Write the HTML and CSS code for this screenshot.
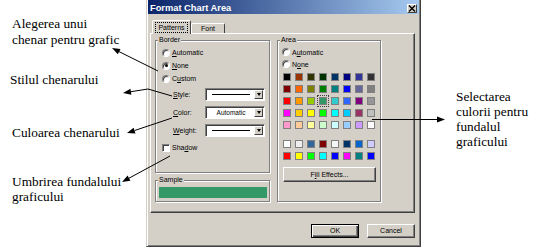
FILE: index.html
```html
<!DOCTYPE html>
<html>
<head>
<meta charset="utf-8">
<link rel="stylesheet" href="styles.css">
</head>
<body>
<div class="figure">
  <div class="notes-left">
    <p class="note n1">Alegerea unui<br>chenar pentru grafic</p>
    <p class="note n2">Stilul chenarului</p>
    <p class="note n3">Culoarea chenarului</p>
    <p class="note n4">Umbrirea fundalului<br>graficului</p>
  </div>

  <div class="dialog">
    <div class="titlebar">
      <span class="title">Format Chart Area</span>
      <span class="close"><svg width="8" height="7" viewBox="0 0 8 7"><path d="M1 0.5L7 6.5M7 0.5L1 6.5" stroke="#000" stroke-width="1.4"/></svg></span>
    </div>
    <div class="tabs">
      <div class="tab active"><span class="focus">Patterns</span></div>
      <div class="tab">Font</div>
    </div>
    <div class="panel">
      <div class="col-left">
        <fieldset class="group border-group">
          <legend>Border</legend>
          <div class="radios">
            <div class="radio"><span class="dot"></span><span><u>A</u>utomatic</span></div>
            <div class="radio"><span class="dot on"></span><span><u>N</u>one</span></div>
            <div class="radio"><span class="dot"></span><span>C<u>u</u>stom</span></div>
          </div>
          <div class="fields">
            <div class="field"><span class="flabel"><u>S</u>tyle:</span><span class="select"><span class="value"><span class="line"></span></span><span class="arrow"></span></span></div>
            <div class="field"><span class="flabel"><u>C</u>olor:</span><span class="select"><span class="value">Automatic</span><span class="arrow"></span></span></div>
            <div class="field"><span class="flabel"><u>W</u>eight:</span><span class="select"><span class="value"><span class="line"></span></span><span class="arrow"></span></span></div>
          </div>
          <div class="check"><span class="box"></span><span>Sha<u>d</u>ow</span></div>
        </fieldset>
        <fieldset class="group sample-group">
          <legend>Sample</legend>
          <div class="sample"></div>
        </fieldset>
      </div>
      <fieldset class="group area-group">
        <legend>Area</legend>
        <div class="radios area-radios">
          <div class="radio"><span class="dot"></span><span>A<u>u</u>tomatic</span></div>
          <div class="radio"><span class="dot"></span><span>N<u>o</u>ne</span></div>
        </div>
        <div class="swatches">
          <span class="sw" style="background:#000000"></span>
          <span class="sw" style="background:#993300"></span>
          <span class="sw" style="background:#333300"></span>
          <span class="sw" style="background:#003300"></span>
          <span class="sw" style="background:#003366"></span>
          <span class="sw" style="background:#000080"></span>
          <span class="sw" style="background:#333399"></span>
          <span class="sw" style="background:#333333"></span>
          <span class="sw" style="background:#800000"></span>
          <span class="sw" style="background:#ff6600"></span>
          <span class="sw" style="background:#808000"></span>
          <span class="sw" style="background:#008000"></span>
          <span class="sw" style="background:#008080"></span>
          <span class="sw" style="background:#0000ff"></span>
          <span class="sw" style="background:#666699"></span>
          <span class="sw" style="background:#808080"></span>
          <span class="sw" style="background:#ff0000"></span>
          <span class="sw" style="background:#ff9900"></span>
          <span class="sw" style="background:#99cc00"></span>
          <span class="sw selected" style="background:#339966"></span>
          <span class="sw" style="background:#33cccc"></span>
          <span class="sw" style="background:#3366ff"></span>
          <span class="sw" style="background:#800080"></span>
          <span class="sw" style="background:#969696"></span>
          <span class="sw" style="background:#ff00ff"></span>
          <span class="sw" style="background:#ffcc00"></span>
          <span class="sw" style="background:#ffff00"></span>
          <span class="sw" style="background:#00ff00"></span>
          <span class="sw" style="background:#00ffff"></span>
          <span class="sw" style="background:#00ccff"></span>
          <span class="sw" style="background:#993366"></span>
          <span class="sw" style="background:#c0c0c0"></span>
          <span class="sw" style="background:#ff99cc"></span>
          <span class="sw" style="background:#ffcc99"></span>
          <span class="sw" style="background:#ffff99"></span>
          <span class="sw" style="background:#ccffcc"></span>
          <span class="sw" style="background:#ccffff"></span>
          <span class="sw" style="background:#99ccff"></span>
          <span class="sw" style="background:#cc99ff"></span>
          <span class="sw" style="background:#ffffff"></span>
        </div>
        <div class="swatches second">
          <span class="sw" style="background:#ffffff"></span>
          <span class="sw" style="background:#eeeeee"></span>
          <span class="sw" style="background:#336699"></span>
          <span class="sw" style="background:#800000"></span>
          <span class="sw" style="background:#f4f4f4"></span>
          <span class="sw" style="background:#003366"></span>
          <span class="sw" style="background:#0066cc"></span>
          <span class="sw" style="background:#ccccff"></span>
          <span class="sw" style="background:#ff0000"></span>
          <span class="sw" style="background:#ffff00"></span>
          <span class="sw" style="background:#00ff00"></span>
          <span class="sw" style="background:#00ffff"></span>
          <span class="sw" style="background:#0000ff"></span>
          <span class="sw" style="background:#ff00ff"></span>
          <span class="sw" style="background:#008080"></span>
          <span class="sw" style="background:#0000ff"></span>
        </div>
        <div class="fill-btn">F<u>i</u>ll Effects...</div>
      </fieldset>
    </div>
    <div class="buttons">
      <div class="btn default">OK</div>
      <div class="btn">Cancel</div>
    </div>
  </div>

  <div class="notes-right">
    <p class="note n5">Selectarea<br>culorii pentru<br>fundalul<br>graficului</p>
  </div>

  <svg class="arrows" width="556" height="252" viewBox="0 0 556 252">
    <g stroke="#000" stroke-width="1" fill="none">
      <line x1="158" y1="71" x2="119" y2="51.6"/>
      <polyline points="172,96 148,89 130.9,91.7"/>
      <line x1="172" y1="118" x2="134.6" y2="130.5"/>
      <line x1="170" y1="156" x2="129" y2="178.2"/>
      <line x1="372" y1="119.5" x2="437" y2="119.5"/>
    </g>
    <g fill="#000">
      <polygon points="112,48 120.5,48.9 117.8,54.3"/>
      <polygon points="123,93 131.4,94.7 130.4,88.8"/>
      <polygon points="127,133 135.5,133.4 133.6,127.7"/>
      <polygon points="122,182 130.4,180.8 127.6,175.6"/>
      <polygon points="445,119.5 437,116.5 437,122.5"/>
    </g>
  </svg>
</div>
</body>
</html>
```

FILE: styles.css
```css
* { box-sizing: border-box; }
html, body { margin: 0; padding: 0; background: #fff; }

.figure {
  position: relative;
  width: 556px;
  height: 252px;
  display: flex;
  overflow: hidden;
}

/* annotations */
.notes-left {
  width: 146px;
  flex: none;
  display: flex;
  flex-direction: column;
  padding-left: 12px;
}
.note {
  margin: 0;
  font-family: "Liberation Serif", "Times New Roman", serif;
  font-size: 13.33px;
  line-height: 15px;
  color: #000;
  white-space: nowrap;
}
.n1 { margin-top: 16px; line-height: 16px; }
.n2 { margin-top: 24px; margin-left: -2px; }
.n3 { margin-top: 38px; }
.n4 { margin-top: 34px; }
.notes-right { flex: 1; padding-left: 35px; padding-top: 89px; }

/* dialog */
.dialog {
  width: 275px;
  height: 247px;
  flex: none;
  background: #d4d0c8;
  border-left: 1px solid #d4d0c8;
  border-right: 1px solid #404040;
  border-bottom: 1px solid #404040;
  box-shadow: inset 1px 0 #fff, inset -1px -1px #808080;
  padding: 0 1px 2px 1px;
  display: flex;
  flex-direction: column;
  font-family: "Liberation Sans", Arial, sans-serif;
  font-size: 7px;
  color: #000;
}
.titlebar {
  height: 14px;
  display: flex;
  align-items: flex-start;
  background: linear-gradient(to right, #0a246a, #a6caf0);
}
.title {
  flex: 1;
  padding: 3px 0 0 2px;
  font-weight: bold;
  font-size: 9.3px;
  line-height: 11px;
  color: #fff;
  white-space: nowrap;
}
.close {
  width: 10px;
  height: 9px;
  margin: 4px 2px 0 0;
  background: #d4d0c8;
  border: 1px solid;
  border-color: #fff #404040 #404040 #fff;
  display: flex;
  align-items: center;
  justify-content: center;
}
.close svg { display: block; }

.tabs {
  height: 19px;
  display: flex;
  align-items: flex-end;
  padding-left: 4px;
}
.tab {
  height: 10px;
  width: 34px;
  border: 1px solid;
  border-color: #fff #404040 transparent #fff;
  border-bottom: none;
  border-radius: 2px 2px 0 0;
  text-align: center;
  line-height: 9px;
  white-space: nowrap;
}
.tab.active {
  width: 39px;
  height: 14px;
  margin-bottom: -1px;
  position: relative;
  z-index: 1;
  background: #d4d0c8;
  padding-top: 2px;
}
.focus {
  display: inline-block;
  padding: 0 2px;
  line-height: 9px;
  outline: 1px dotted #000;
}

.panel {
  width: 265px;
  height: 180px;
  margin: 0 4px 0 2px;
  border: 1px solid;
  border-color: #fff #404040 #404040 #fff;
  box-shadow: inset -1px -1px #808080;
  padding: 2px 0 0 4px;
  display: flex;
  gap: 7px;
}
.col-left {
  width: 115px;
  display: flex;
  flex-direction: column;
}

.group {
  margin: 0;
  padding: 0;
  min-width: 0;
  border: 1px solid #808080;
  box-shadow: inset 1px 1px #fff, 1px 1px #fff;
}
.group legend {
  margin-left: 2px;
  padding: 0 1px;
  height: 8px;
  line-height: 8px;
  font-size: 7px;
  background: #d4d0c8;
  position: relative;
}
.border-group { height: 137px; }
.sample-group { height: 26px; margin-top: 3px; }
.area-group { width: 104px; height: 166px; }

.radios { padding: 2px 0 0 6px; }
.radio {
  height: 13px;
  display: flex;
  align-items: center;
  white-space: nowrap;
}
.area-radios { padding-left: 4px; }
.area-radios .radio { height: 12px; }
.dot {
  width: 8px;
  height: 8px;
  margin-right: 2px;
  border-radius: 50%;
  background: #fff;
  border: 1px solid;
  border-color: #808080 #fff #fff #808080;
  box-shadow: inset 1px 1px #404040;
  display: flex;
  align-items: center;
  justify-content: center;
  flex: none;
}
.dot.on::after {
  content: "";
  width: 3px;
  height: 3px;
  border-radius: 50%;
  background: #000;
}

.fields {
  margin-top: 3px;
  display: flex;
  flex-direction: column;
  gap: 5px;
}
.field {
  height: 13px;
  display: flex;
  align-items: center;
}
.flabel {
  width: 49px;
  padding-left: 17px;
  white-space: nowrap;
}
.select {
  width: 60px;
  height: 13px;
  display: flex;
  background: #fff;
  border: 1px solid;
  border-color: #808080 #fff #fff #808080;
  box-shadow: inset 1px 1px #404040;
  padding: 1px 1px 1px 2px;
}
.value {
  flex: 1;
  display: flex;
  align-items: center;
  justify-content: center;
  font-size: 6.5px;
  white-space: nowrap;
}
.line {
  display: block;
  width: 38px;
  height: 1px;
  background: #000;
}
.arrow {
  width: 9px;
  background: #d4d0c8;
  border: 1px solid;
  border-color: #fff #404040 #404040 #fff;
  display: flex;
  align-items: center;
  justify-content: center;
}
.arrow::after {
  content: "";
  border-left: 2.5px solid transparent;
  border-right: 2.5px solid transparent;
  border-top: 3px solid #000;
}

.check {
  margin-top: 6px;
  padding-left: 6px;
  height: 9px;
  display: flex;
  align-items: center;
}
.box {
  width: 8px;
  height: 8px;
  margin-right: 2px;
  background: #fff;
  border: 1px solid;
  border-color: #808080 #fff #fff #808080;
  box-shadow: inset 1px 1px #404040;
}

.sample {
  height: 11px;
  margin: 3px 2px 0 3px;
  background: #339966;
}

.swatches {
  margin-top: 3px;
  padding-left: 5px;
  display: grid;
  grid-template-columns: repeat(8, 8px);
  grid-auto-rows: 8px;
  gap: 4px;
}
.swatches.second { margin-top: 11px; }
.sw {
  border: 1px solid #808080;
}
.sw.selected {
  outline: 1px dotted #404040;
  outline-offset: 1px;
}
.fill-btn {
  width: 93px;
  height: 15px;
  margin: 7px 0 0 5px;
  border: 1px solid;
  border-color: #fff #404040 #404040 #fff;
  box-shadow: inset -1px -1px #808080;
  text-align: center;
  line-height: 13px;
  white-space: nowrap;
}

.buttons {
  margin-top: 11px;
  padding-right: 4px;
  display: flex;
  justify-content: flex-end;
  gap: 8px;
}
.btn {
  width: 48px;
  height: 14px;
  border: 1px solid;
  border-color: #fff #404040 #404040 #fff;
  box-shadow: inset -1px -1px #808080;
  text-align: center;
  line-height: 12px;
}
.btn.default {
  border-color: #000;
  box-shadow: inset 1px 1px #fff, inset -1px -1px #404040, inset -2px -2px #808080;
}

.arrows {
  position: absolute;
  left: 0;
  top: 0;
  pointer-events: none;
}
```
